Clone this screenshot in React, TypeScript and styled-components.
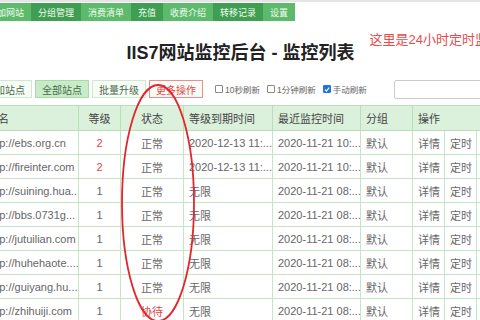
import styled, { createGlobalStyle } from "styled-components";

const GlobalStyle = createGlobalStyle`
  html, body {
    margin: 0;
    padding: 0;
    background: #ffffff;
    overflow: hidden;
  }
  body {
    font-family: "Liberation Sans", "Noto Sans CJK SC", sans-serif;
    color: #555555;
  }
`;

type Row = {
  url: string;
  level: string;
  status: string;
  expire: string;
  last: string;
};

const rows: Row[] = [
  { url: "http://ebs.org.cn", level: "2", status: "正常", expire: "2020-12-13 11:...", last: "2020-11-21 10:..." },
  { url: "http://fireinter.com", level: "2", status: "正常", expire: "2020-12-13 11:...", last: "2020-11-21 10:..." },
  { url: "http://suining.hua...", level: "1", status: "正常", expire: "无限", last: "2020-11-21 08:..." },
  { url: "http://bbs.0731g...", level: "1", status: "正常", expire: "无限", last: "2020-11-21 08:..." },
  { url: "http://jutuilian.com", level: "1", status: "正常", expire: "无限", last: "2020-11-21 08:..." },
  { url: "http://huhehaote....", level: "1", status: "正常", expire: "无限", last: "2020-11-21 08:..." },
  { url: "http://guiyang.hu...", level: "1", status: "正常", expire: "无限", last: "2020-11-21 08:..." },
  { url: "http://zhihuiji.com", level: "1", status: "协待", expire: "无限", last: "2020-11-21 08:..." },
];

const tabs = ["添加网站", "分组管理", "消费清单", "充值", "收费介绍", "转移记录", "设置"];

export default function App() {
  return (
    <>
      <GlobalStyle />
      <Page>
        <NavBar>
          {tabs.map((t, i) => (
            <Tab key={t} $dark={i % 2 === 1}>
              {t}
            </Tab>
          ))}
        </NavBar>

        <TitleArea>
          <span />
          <Title>IIS7网站监控后台 - 监控列表</Title>
          <Note>这里是24小时定时监控</Note>
        </TitleArea>

        <Toolbar>
          <Button>添加站点</Button>
          <Button $active>全部站点</Button>
          <Button>批量升级</Button>
          <Button $danger>更多操作</Button>
          <Checks>
            <Check>
              <Box />
              10秒刷新
            </Check>
            <Check>
              <Box />
              1分钟刷新
            </Check>
            <Check>
              <Box $on>
                <svg width="7" height="7" viewBox="0 0 8 8">
                  <path d="M1.2 4.2 L3.2 6.1 L6.9 1.6" stroke="#fff" strokeWidth="1.5" fill="none" />
                </svg>
              </Box>
              手动刷新
            </Check>
          </Checks>
          <Search />
        </Toolbar>

        <Table>
          <colgroup>
            <col style={{ width: 97 }} />
            <col style={{ width: 42 }} />
            <col style={{ width: 63 }} />
            <col style={{ width: 89 }} />
            <col style={{ width: 88 }} />
            <col style={{ width: 52 }} />
            <col style={{ width: 32 }} />
            <col style={{ width: 32 }} />
            <col style={{ width: 32 }} />
          </colgroup>
          <thead>
            <tr>
              <Th>域名</Th>
              <Th $center>等级</Th>
              <Th $center>状态</Th>
              <Th>等级到期时间</Th>
              <Th>最近监控时间</Th>
              <Th>分组</Th>
              <Th colSpan={3}>操作</Th>
            </tr>
          </thead>
          <tbody>
            {rows.map((r) => (
              <tr key={r.url}>
                <Td>{r.url}</Td>
                <Td $center $red={r.level === "2"}>
                  {r.level}
                </Td>
                <Td $center $red={r.status !== "正常"}>
                  {r.status}
                </Td>
                <Td>{r.expire}</Td>
                <Td>{r.last}</Td>
                <Td>默认</Td>
                <Td>详情</Td>
                <Td>定时</Td>
                <Td>删除</Td>
              </tr>
            ))}
          </tbody>
        </Table>
      </Page>

      <Annotation width="480" height="320" viewBox="0 0 480 320">
        <ellipse cx="158" cy="203" rx="36" ry="118" fill="none" stroke="#e2262d" strokeWidth="1.8" />
      </Annotation>
    </>
  );
}

const Page = styled.div`
  width: 520px;
  margin-left: -19px;
`;

const NavBar = styled.div`
  display: flex;
  border-top: 2px solid #e4e6e4;
  padding-top: 1px;
  height: 18px;
`;

const Tab = styled.div<{ $dark?: boolean }>`
  display: flex;
  align-items: center;
  padding: 0 7px;
  font-size: 9px;
  color: #f2fbf2;
  white-space: nowrap;
  background: ${(p) => (p.$dark ? "#3f9e51" : "#5cba6a")};
`;

const TitleArea = styled.div`
  display: grid;
  grid-template-columns: 1fr auto 1fr;
  align-items: start;
  height: 58px;
`;

const Title = styled.h1`
  margin: 22px 0 0;
  font-size: 18px;
  line-height: 20px;
  font-weight: bold;
  color: #222222;
  white-space: nowrap;
`;

const Note = styled.div`
  margin: 11px 0 0 15px;
  font-size: 13px;
  line-height: 16px;
  color: #ea4a4a;
  white-space: nowrap;
`;

const Toolbar = styled.div`
  display: flex;
  align-items: center;
  gap: 3px;
  margin-left: -3px;
  height: 20px;
  margin-bottom: 6px;
  & > * {
    flex-shrink: 0;
  }
`;

const Button = styled.div<{ $active?: boolean; $danger?: boolean }>`
  width: 54px;
  height: 18px;
  box-sizing: border-box;
  display: flex;
  align-items: center;
  justify-content: center;
  font-size: 10px;
  white-space: nowrap;
  color: ${(p) => (p.$danger ? "#e84545" : "#4a6a4a")};
  background: ${(p) => (p.$active ? "#c8ebc8" : "#f7fcf7")};
  border: 1px solid ${(p) => (p.$danger ? "#f08c8c" : p.$active ? "#a9dba9" : "#cfe9cf")};
`;

const Checks = styled.div`
  display: flex;
  align-items: center;
  gap: 7px;
  margin-left: 9px;
`;

const Check = styled.label`
  display: flex;
  align-items: center;
  gap: 2px;
  font-size: 8.5px;
  color: #666666;
  white-space: nowrap;
`;

const Box = styled.span<{ $on?: boolean }>`
  width: 8px;
  height: 8px;
  box-sizing: border-box;
  display: flex;
  align-items: center;
  justify-content: center;
  border: 1px solid ${(p) => (p.$on ? "#1a73e8" : "#888888")};
  background: ${(p) => (p.$on ? "#1a73e8" : "#ffffff")};
  border-radius: 1px;
`;

const Search = styled.div`
  margin-left: 24px;
  width: 110px;
  height: 19px;
  box-sizing: border-box;
  border: 1px solid #cccccc;
  border-radius: 2px;
`;

const Table = styled.table`
  border-collapse: collapse;
  table-layout: fixed;
  width: 527px;
  font-size: 11px;
  color: #666666;
`;

const Th = styled.th<{ $center?: boolean }>`
  height: 24px;
  padding: 0 5px;
  background: #dcf1dc;
  border: 1px solid #b9dfb9;
  font-weight: normal;
  color: #444444;
  text-align: ${(p) => (p.$center ? "center" : "left")};
  white-space: nowrap;
  overflow: hidden;
`;

const Td = styled.td<{ $center?: boolean; $red?: boolean }>`
  height: 23px;
  padding: 0 5px;
  border: 1px solid #c6e5c6;
  text-align: ${(p) => (p.$center ? "center" : "left")};
  color: ${(p) => (p.$red ? "#e24545" : "#666666")};
  white-space: nowrap;
  overflow: hidden;
`;

const Annotation = styled.svg`
  position: absolute;
  top: 0;
  left: 0;
  pointer-events: none;
`;
